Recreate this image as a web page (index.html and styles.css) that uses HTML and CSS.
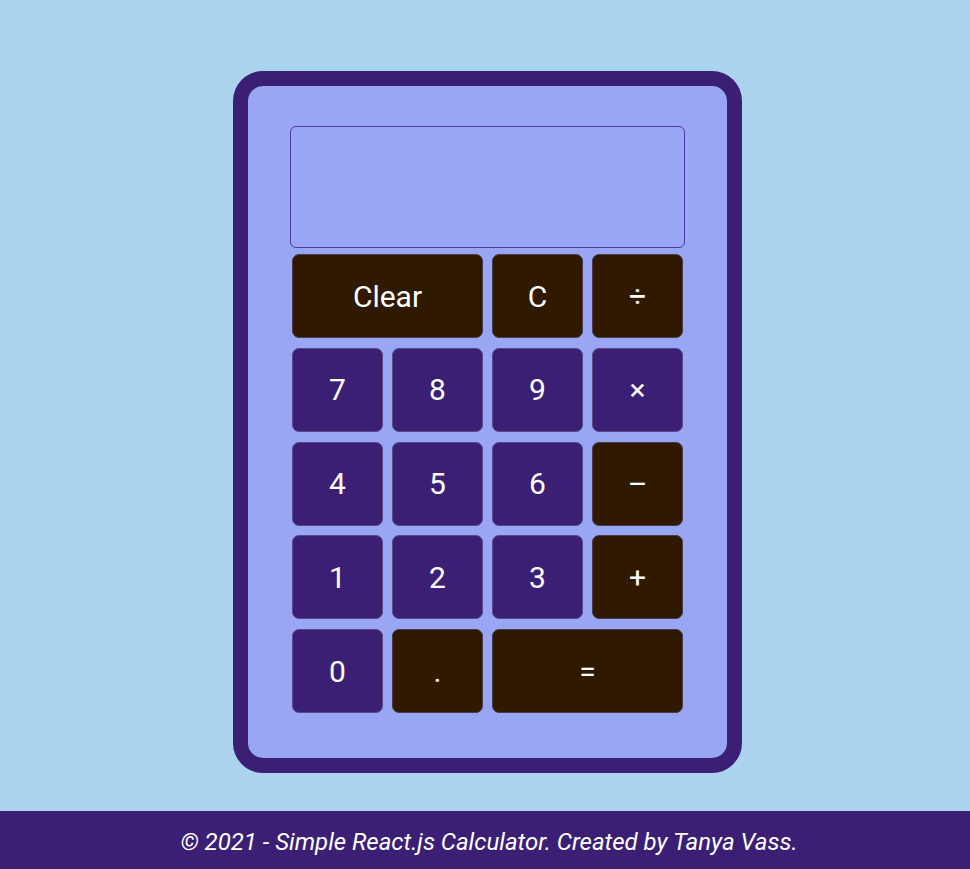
FILE: index.html
```html
<!DOCTYPE html>
<html>
<head>
<meta charset="utf-8">
<link rel="stylesheet" href="styles.css">
</head>
<body>
<main class="page">
  <div class="calculator">
    <div class="display"></div>
    <div class="keypad">
      <button class="key dark span2">Clear</button>
      <button class="key dark">C</button>
      <button class="key dark">÷</button>
      <button class="key">7</button>
      <button class="key">8</button>
      <button class="key">9</button>
      <button class="key">×</button>
      <button class="key">4</button>
      <button class="key">5</button>
      <button class="key">6</button>
      <button class="key dark">–</button>
      <button class="key">1</button>
      <button class="key">2</button>
      <button class="key">3</button>
      <button class="key dark">+</button>
      <button class="key">0</button>
      <button class="key dark">.</button>
      <button class="key dark span2">=</button>
    </div>
  </div>
</main>
<footer class="footer">© 2021 - Simple React.js Calculator. Created by Tanya Vass.</footer>
</body>
</html>
```
FILE: styles.css
```css
html, body {
  margin: 0;
  padding: 0;
  height: 100%;
}
body {
  background: #abd4ee;
  font-family: Roboto, "Liberation Sans", sans-serif;
  display: flex;
  flex-direction: column;
}
.page {
  flex: 1;
  display: flex;
  justify-content: center;
  align-items: flex-start;
  padding: 71px 0 0 5px;
}
.calculator {
  box-sizing: border-box;
  width: 509px;
  border: 15px solid #3b1f74;
  border-radius: 30px;
  background: #99a6f4;
  padding: 40px 42px 45px;
}
.display {
  height: 122px;
  box-sizing: border-box;
  border: 1px solid #4d3aa0;
  border-radius: 6px;
}
.keypad {
  margin-top: 6px;
  padding: 0 2px;
  display: grid;
  grid-template-columns: repeat(4, 91px);
  grid-auto-rows: 84px;
  column-gap: 9px;
  row-gap: 9.75px;
}
.key {
  font-family: Roboto, "Liberation Sans", sans-serif;
  font-size: 30px;
  color: #ffffff;
  background: #3b1f74;
  border: 1px solid #5a4a8a;
  border-radius: 7px;
  padding: 0;
  margin: 0;
}
.key.dark {
  background: #2f1900;
  border-color: #4a3a4a;
}
.span2 {
  grid-column: span 2;
}
.footer {
  height: 58px;
  background: #3b1f74;
  color: #ffffff;
  font-style: italic;
  font-size: 24px;
  display: flex;
  align-items: center;
  justify-content: center;
  padding: 3px 0 0 8px;
  box-sizing: border-box;
}
```
